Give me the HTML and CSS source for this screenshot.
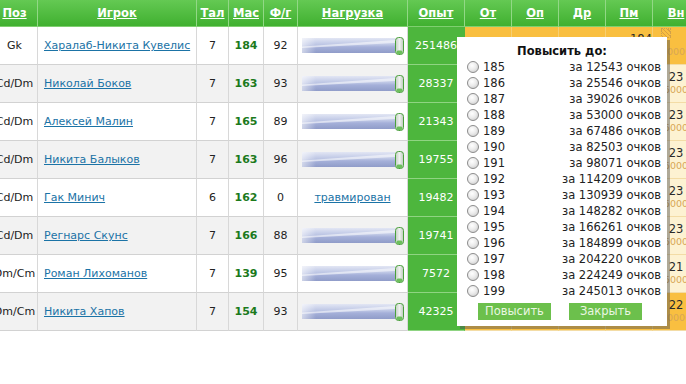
FILE: index.html
```html
<!DOCTYPE html>
<html lang="ru">
<head>
<meta charset="utf-8">
<title>Игроки</title>
<link rel="stylesheet" href="styles.css">
</head>
<body>
<div class="wrap">
<table class="roster">
<colgroup>
<col class="c-poz"><col class="c-name"><col class="c-tal"><col class="c-mas"><col class="c-fg"><col class="c-load"><col class="c-exp"><col class="c-sk"><col class="c-sk"><col class="c-sk"><col class="c-sk"><col class="c-sk">
</colgroup>
<thead>
<tr class="hrow">
<th><a>Поз</a></th><th><a>Игрок</a></th><th><a>Тал</a></th><th><a>Мас</a></th><th><a>Ф/г</a></th><th><a>Нагрузка</a></th><th><a>Опыт</a></th><th><a>От</a></th><th><a>Оп</a></th><th><a>Др</a></th><th><a>Пм</a></th><th><a>Вн</a></th>
</tr>
</thead>
<tbody>
<tr class="r">
<td>Gk</td><td class="name"><a>Харалаб-Никита Кувелис</a></td><td>7</td><td class="mas">184</td><td>92</td>
<td class="load"><svg class="bar" viewBox="0 0 102 20" width="102" height="20"><use href="#loadbar"/></svg></td>
<td class="exp">251486</td>
<td class="sk hi"><div class="v">20</div></td><td class="sk hi"><div class="v">18</div></td><td class="sk hi"><div class="v">16</div></td><td class="sk hi pm"><div class="v">184</div><div class="s">5000</div></td><td class="sk hi"><span class="mark"></span><div class="v">&nbsp;</div><div class="s">10000</div></td>
</tr>
<tr class="r alt">
<td>Cd/Dm</td><td class="name"><a>Николай Боков</a></td><td>7</td><td class="mas">163</td><td>93</td>
<td class="load"><svg class="bar" viewBox="0 0 102 20" width="102" height="20"><use href="#loadbar"/></svg></td>
<td class="exp">28337</td>
<td class="sk"><div class="v">22</div><div class="s">5000</div></td><td class="sk"><div class="v">24</div><div class="s">5000</div></td><td class="sk"><div class="v">21</div><div class="s">5000</div></td><td class="sk"><div class="v">20</div><div class="s">5000</div></td><td class="sk"><div class="v">23</div><div class="s">5000</div></td>
</tr>
<tr class="r">
<td>Cd/Dm</td><td class="name"><a>Алексей Малин</a></td><td>7</td><td class="mas">165</td><td>89</td>
<td class="load"><svg class="bar" viewBox="0 0 102 20" width="102" height="20"><use href="#loadbar"/></svg></td>
<td class="exp">21343</td>
<td class="sk"><div class="v">21</div><div class="s">5000</div></td><td class="sk"><div class="v">25</div><div class="s">5000</div></td><td class="sk"><div class="v">22</div><div class="s">5000</div></td><td class="sk"><div class="v">20</div><div class="s">5000</div></td><td class="sk"><div class="v">23</div><div class="s">5000</div></td>
</tr>
<tr class="r alt">
<td>Cd/Dm</td><td class="name"><a>Никита Балыков</a></td><td>7</td><td class="mas">163</td><td>96</td>
<td class="load"><svg class="bar" viewBox="0 0 102 20" width="102" height="20"><use href="#loadbar"/></svg></td>
<td class="exp">19755</td>
<td class="sk"><div class="v">22</div><div class="s">5000</div></td><td class="sk"><div class="v">23</div><div class="s">5000</div></td><td class="sk"><div class="v">20</div><div class="s">5000</div></td><td class="sk"><div class="v">21</div><div class="s">5000</div></td><td class="sk"><div class="v">23</div><div class="s">5000</div></td>
</tr>
<tr class="r">
<td>Cd/Dm</td><td class="name"><a>Гак Минич</a></td><td>6</td><td class="mas">162</td><td>0</td>
<td class="load"><a class="injured">травмирован</a></td>
<td class="exp">19482</td>
<td class="sk"><div class="v">21</div><div class="s">5000</div></td><td class="sk"><div class="v">24</div><div class="s">5000</div></td><td class="sk"><div class="v">20</div><div class="s">5000</div></td><td class="sk"><div class="v">20</div><div class="s">5000</div></td><td class="sk"><div class="v">23</div><div class="s">5000</div></td>
</tr>
<tr class="r alt">
<td>Cd/Dm</td><td class="name"><a>Регнарс Скунс</a></td><td>7</td><td class="mas">166</td><td>88</td>
<td class="load"><svg class="bar" viewBox="0 0 102 20" width="102" height="20"><use href="#loadbar"/></svg></td>
<td class="exp">19741</td>
<td class="sk"><div class="v">22</div><div class="s">5000</div></td><td class="sk"><div class="v">24</div><div class="s">5000</div></td><td class="sk"><div class="v">21</div><div class="s">5000</div></td><td class="sk"><div class="v">21</div><div class="s">5000</div></td><td class="sk"><div class="v">23</div><div class="s">5000</div></td>
</tr>
<tr class="r">
<td>Dm/Cm</td><td class="name"><a>Роман Лихоманов</a></td><td>7</td><td class="mas">139</td><td>95</td>
<td class="load"><svg class="bar" viewBox="0 0 102 20" width="102" height="20"><use href="#loadbar"/></svg></td>
<td class="exp">7572</td>
<td class="sk"><div class="v">18</div><div class="s">5000</div></td><td class="sk"><div class="v">22</div><div class="s">5000</div></td><td class="sk"><div class="v">23</div><div class="s">5000</div></td><td class="sk"><div class="v">22</div><div class="s">5000</div></td><td class="sk"><div class="v">21</div><div class="s">5000</div></td>
</tr>
<tr class="r alt">
<td>Dm/Cm</td><td class="name"><a>Никита Хапов</a></td><td>7</td><td class="mas">154</td><td>93</td>
<td class="load"><svg class="bar" viewBox="0 0 102 20" width="102" height="20"><use href="#loadbar"/></svg></td>
<td class="exp">42325</td>
<td class="sk hi"><div class="v">19</div><div class="s">5000</div></td><td class="sk hi"><div class="v">23</div><div class="s">5000</div></td><td class="sk hi"><div class="v">24</div><div class="s">5000</div></td><td class="sk hi"><div class="v">22</div><div class="s">5000</div></td><td class="sk hi"><div class="v">22</div><div class="s">10000</div></td>
</tr>
</tbody>
</table>

<div class="popup">
<div class="ptitle">Повысить до:</div>
<ul class="plist">
<li><label class="opt"><span class="radio"></span>185</label><span class="cost">за 12543 очков</span></li>
<li><label class="opt"><span class="radio"></span>186</label><span class="cost">за 25546 очков</span></li>
<li><label class="opt"><span class="radio"></span>187</label><span class="cost">за 39026 очков</span></li>
<li><label class="opt"><span class="radio"></span>188</label><span class="cost">за 53000 очков</span></li>
<li><label class="opt"><span class="radio"></span>189</label><span class="cost">за 67486 очков</span></li>
<li><label class="opt"><span class="radio"></span>190</label><span class="cost">за 82503 очков</span></li>
<li><label class="opt"><span class="radio"></span>191</label><span class="cost">за 98071 очков</span></li>
<li><label class="opt"><span class="radio"></span>192</label><span class="cost">за 114209 очков</span></li>
<li><label class="opt"><span class="radio"></span>193</label><span class="cost">за 130939 очков</span></li>
<li><label class="opt"><span class="radio"></span>194</label><span class="cost">за 148282 очков</span></li>
<li><label class="opt"><span class="radio"></span>195</label><span class="cost">за 166261 очков</span></li>
<li><label class="opt"><span class="radio"></span>196</label><span class="cost">за 184899 очков</span></li>
<li><label class="opt"><span class="radio"></span>197</label><span class="cost">за 204220 очков</span></li>
<li><label class="opt"><span class="radio"></span>198</label><span class="cost">за 224249 очков</span></li>
<li><label class="opt"><span class="radio"></span>199</label><span class="cost">за 245013 очков</span></li>
</ul>
<div class="pbtns"><button class="pbtn">Повысить</button><button class="pbtn">Закрыть</button></div>
</div>
</div>

<svg class="defs" width="0" height="0" aria-hidden="true">
<defs>
<linearGradient id="bg1" x1="0" y1="0" x2="0" y2="1">
<stop offset="0" stop-color="#e2e6f4"/>
<stop offset="0.45" stop-color="#bcc5e4"/>
<stop offset="0.6" stop-color="#a5b0d9"/>
<stop offset="1" stop-color="#909cc9"/>
</linearGradient>
<linearGradient id="fade" x1="0" y1="0" x2="1" y2="0">
<stop offset="0" stop-color="#fff" stop-opacity="0.55"/>
<stop offset="0.15" stop-color="#fff" stop-opacity="0"/>
</linearGradient>
<linearGradient id="cap" x1="0" y1="0" x2="1" y2="0">
<stop offset="0" stop-color="#c4cec4"/>
<stop offset="0.5" stop-color="#eef1ee"/>
<stop offset="1" stop-color="#bfc9bf"/>
</linearGradient>
<g id="loadbar">
<rect x="0" y="2" width="93" height="15" fill="url(#bg1)"/>
<polygon points="0,10.5 93,4 93,7 0,12" fill="#ffffff" fill-opacity="0.55"/>
<rect x="0" y="2" width="93" height="15" fill="url(#fade)"/>
<rect x="93.5" y="1.5" width="8" height="17" rx="3" fill="url(#cap)" stroke="#4aa03c" stroke-width="1"/>
<rect x="94.5" y="14.5" width="6" height="3.5" rx="1.5" fill="#6cbf5c"/>
</g>
</defs>
</svg>
</body>
</html>
```
FILE: styles.css
```css
html, body {
  margin: 0;
  padding: 0;
  overflow: hidden;
  background: #ffffff;
}
body {
  font-family: "DejaVu Sans", Verdana, sans-serif;
  font-size: 11.5px;
  color: #222222;
}
.wrap {
  position: relative;
  width: 686px;
  height: 384px;
}
.defs {
  position: absolute;
  width: 0;
  height: 0;
}
.roster {
  border-collapse: separate;
  border-spacing: 0;
  table-layout: fixed;
  width: 708px;
  margin-left: -8px;
}
.c-poz { width: 46px; }
.c-name { width: 159px; }
.c-tal { width: 32px; }
.c-mas { width: 35px; }
.c-fg { width: 34px; }
.c-load { width: 110px; }
.c-exp { width: 57px; }
.c-sk { width: 47px; }

.hrow { height: 27px; }
.hrow th {
  padding: 0 0 1px;
  background: linear-gradient(#64c953, #40b030);
  border-right: 1px solid #92d886;
  border-bottom: 1px solid #7fcf70;
  font-weight: bold;
  text-align: center;
  white-space: nowrap;
}
.hrow th a {
  color: #ffffff;
  text-decoration: underline;
}
.r { height: 38px; }
.r td {
  padding: 0;
  font-size: 11px;
  text-align: center;
  border-right: 1px solid #d8d8d8;
  border-bottom: 1px solid #d2d2d2;
  white-space: nowrap;
  overflow: hidden;
  background: #ffffff;
}
.r.alt td { background: #f2f2f2; }
.r td.name {
  text-align: left;
  padding-left: 6px;
}
.name a, .injured {
  color: #1b73a6;
  text-decoration: underline;
}
.r td.mas {
  color: #1c7a1c;
  font-weight: bold;
}
.r td.load {
  line-height: 0;
}
.r td.load .injured { line-height: normal; }
.bar { display: inline-block; vertical-align: middle; }
.r td.exp {
  background: #4db63d;
  color: #ffffff;
  border-right: 1px solid #4db63d;
  border-bottom: 1px solid #8fd482;
}
.r.alt td.exp { background: #4db63d; }
.r td.sk {
  background: #fdf2d2;
  border-right: 1px solid #f6e2ae;
  border-bottom: 1px solid #f3dca6;
  position: relative;
  overflow: visible;
}
.r td.sk.hi, .r.alt td.sk.hi { background: #f9bf40; border-right-color: #f7cf72; }
.r.alt td.sk { background: #fdf2d2; }
.r td.sk.pm { text-align: right; }
.v {
  font-size: 11.5px;
  line-height: 13px;
  color: #2a2a2a;
}
.s {
  font-size: 9.5px;
  line-height: 12px;
  color: #d8a656;
}
.mark {
  position: absolute;
  top: 1px;
  left: 8px;
  width: 10px;
  height: 10px;
  background: repeating-linear-gradient(45deg, #d9a040 0 1px, transparent 1px 3px);
  border: 1px dotted #caa050;
  box-sizing: border-box;
}

.popup {
  position: absolute;
  left: 457px;
  top: 37px;
  width: 210px;
  height: 289px;
  box-sizing: border-box;
  padding-top: 6px;
  background: #ffffff;
  box-shadow: 3px 3px 0 rgba(80, 80, 80, 0.45);
}
.ptitle {
  text-align: center;
  font-weight: bold;
  line-height: 16px;
  color: #111111;
}
.plist {
  list-style: none;
  margin: 0;
  padding: 0;
}
.plist li {
  height: 16px;
  display: flex;
  align-items: center;
  justify-content: space-between;
  padding: 0 6px 0 10px;
}
.opt {
  display: flex;
  align-items: center;
}
.radio {
  width: 12px;
  height: 12px;
  margin-right: 4px;
  border-radius: 50%;
  box-sizing: border-box;
  border: 1px solid #8c8c8c;
  background: radial-gradient(circle at 40% 35%, #ffffff 0, #ececec 45%, #c4c4c4 100%);
}
.pbtns {
  display: flex;
  justify-content: center;
  gap: 18px;
  margin-top: 4px;
  padding-right: 4px;
}
.pbtn {
  width: 73px;
  height: 17px;
  padding: 0;
  border: none;
  background: #6cc04c;
  color: #eaf7e2;
  font-family: inherit;
  font-size: 11.5px;
  line-height: 17px;
}
```
